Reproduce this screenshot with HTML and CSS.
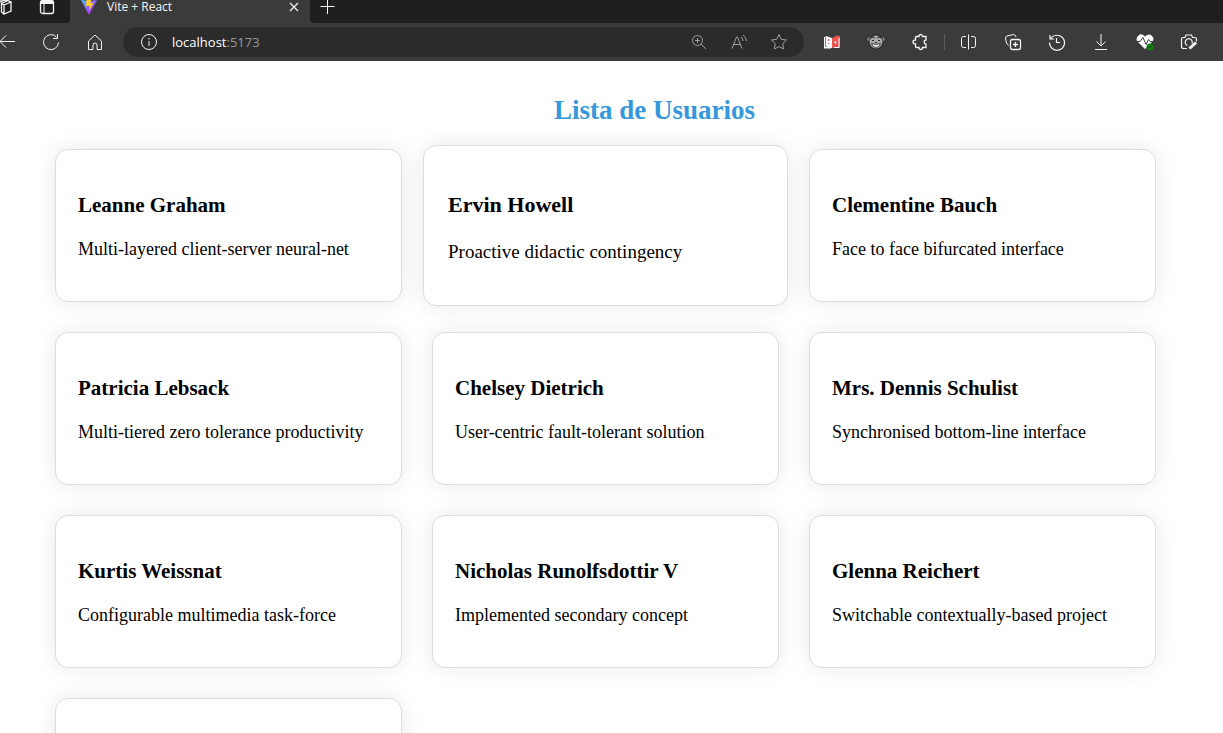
FILE: index.html
```html
<!DOCTYPE html>
<html lang="es">
<head>
<meta charset="utf-8">
<title>Vite + React</title>
<link rel="stylesheet" href="styles.css">
</head>
<body>
<header class="browser">
  <div class="tabstrip">
    <div class="strip-tools">
      <button class="strip-btn" aria-label="Workspaces"><svg class="icon" viewBox="0 0 18 18"><path stroke-width="1.300" d="M8 7l7-3v9l-7 3zM8 7L5.500 5.500v8.500L8 16M5.500 5.500l6.500-3 3 1.500M3 13V4.500L9 2l2 .5M.5 12V4L6 1.500l2 .5"/></svg></button>
      <button class="strip-btn" aria-label="Tab actions"><svg class="icon" viewBox="0 0 18 18"><rect x="2.500" y="2.500" width="13" height="13" rx="2" stroke-width="1.300"/><path d="M3 4.500h12" stroke-width="3"/><path d="M6 5v10"/></svg></button>
    </div>
    <div class="tab">
      <svg class="favicon" viewBox="0 0 18 18"><defs><linearGradient id="v" x1="0" y1="0" x2="1" y2="1"><stop offset="0" stop-color="#41c9ff"/><stop offset=".6" stop-color="#a24bff"/><stop offset="1" stop-color="#bd34fe"/></linearGradient></defs><path fill="url(#v)" d="M1 2l8 1 8-1-8 15z"/><path fill="#ffc928" d="M6.500 1l5-1-1 5h3L9 13l.5-5H6z"/></svg>
      <span class="tab-title">Vite + React</span>
      <button class="close" aria-label="Close tab"><svg class="icon" viewBox="0 0 18 18"><path stroke-width="1.200" d="M5 5l8 8M13 5l-8 8"/></svg></button>
    </div>
    <button class="new-tab" aria-label="New tab"><svg class="icon" viewBox="0 0 18 18"><path d="M9.500 2v14M2.500 8.500h14"/></svg></button>
  </div>
  <div class="toolbar">
    <nav class="nav">
      <button class="tool" aria-label="Back"><svg class="icon" viewBox="0 0 18 18"><path d="M17 8.500H2M8 2.500l-6 6 6 6"/></svg></button>
      <button class="tool" aria-label="Reload"><svg class="icon" viewBox="0 0 18 18"><path d="M16.500 9.500A7.500 7.500 0 1 1 14.500 4M15.500 1v4.500H11"/></svg></button>
      <button class="tool" aria-label="Home"><svg class="icon" viewBox="0 0 18 18"><path d="M2.500 8L9 2l6.500 6v8.500H11V12q0-2-2-2t-2 2v4.500H2.500z"/></svg></button>
    </nav>
    <div class="address">
      <button class="info" aria-label="Site information"><svg class="icon" viewBox="0 0 18 18"><circle cx="9" cy="9" r="7.500"/><path d="M9 8v5M9 5v1.500"/></svg></button>
      <a class="url" href="#">localhost<span class="port">:5173</span></a>
      <button class="page-tool" aria-label="Zoom"><svg class="icon" viewBox="0 0 18 18"><circle cx="7.500" cy="7.500" r="5"/><path d="M11 11l5 5M5 7.500h5M7.500 5v5"/></svg></button>
      <button class="page-tool" aria-label="Read aloud"><svg class="icon" viewBox="0 0 18 18"><path d="M2 15.500L6.500 4h1L12 15.500M3.500 11.500h7M11 4q2 1.500 2 4M13 2q3 2 3.500 6"/></svg></button>
      <button class="page-tool" aria-label="Favorite"><svg class="icon" viewBox="0 0 18 18"><path d="M9 1.500l2.300 4.800 5.200.7-3.800 3.700.9 5.300L9 13.500 4.400 16l.9-5.300L1.500 7l5.200-.7z"/></svg></button>
    </div>
    <div class="tools">
      <button class="tool" aria-label="Dictionary"><svg class="icon plain" viewBox="0 0 18 18"><path fill="#fff" d="M1 4h2v10h5v1.500H1z"/><path fill="#ef5350" d="M2 3h1v11h6l6-.5V3h2v12H2z"/><path fill="#fff" d="M3 3l6 2v10l-6-1.500z"/><path fill="#ef5350" d="M9 5l6-3v11.500L9 15z"/><path fill="none" stroke="#fff" d="M1.500 4v10.500H8M16 5v9.500h-5M11 9q2-1 2 0t-1 2"/><path stroke="#ef5350" d="M5.500 6v2M5.500 10v1"/></svg></button>
      <button class="tool" aria-label="Monkey extension"><svg class="icon plain" viewBox="0 0 18 18"><circle cx="2.500" cy="6.500" r="2" fill="#999"/><circle cx="15.500" cy="6.500" r="2" fill="#999"/><circle cx="9" cy="9" r="7.500" fill="#262626"/><circle cx="9" cy="9" r="6.500" fill="#aaa"/><path fill="none" stroke="#262626" d="M4 5q3-2 4 0M10 5q2-2 4 0M5 7.500h2M11 7.500h2M8 9.500h2"/><path fill="#eee" stroke="#262626" stroke-width=".8" d="M4.500 10.500q4.500 2 9 0-1 4-4.500 4t-4.500-4z"/></svg></button>
      <button class="tool" aria-label="Extensions"><svg class="icon" viewBox="0 0 18 18"><path stroke-width="1.300" d="M5.500 3.500H8q0-2 1.700-2t1.800 2H15V7q-2 .3-2 2t2 2v3.500h-3.500q0 2-1.800 2T8 14.500H5.500q-1 0-1-1V11q-2.500 0-2.500-2t2.500-2V4.500q0-1 1-1z"/></svg></button>
      <span class="divider"></span>
      <button class="tool" aria-label="Split screen"><svg class="icon" viewBox="0 0 18 18"><path d="M6 3.500H3.500q-2 0-2 2v7q0 2 2 2H6M11 3.500h2.500q2 0 2 2v7q0 2-2 2H11M8.500 1.500v15"/></svg></button>
      <button class="tool" aria-label="Collections"><svg class="icon" viewBox="0 0 18 18"><rect x="6.500" y="6.500" width="10" height="10" rx="2" stroke-width="1.300"/><path d="M11.500 9v5M9 11.500h5" stroke-width="1.300"/><path d="M4.500 12.500L2.500 10l-1-5q0-1.500 1.500-2l6.500-1.500q1.500 0 2 1.500l.5 1"/></svg></button>
      <button class="tool" aria-label="History"><svg class="icon" viewBox="0 0 18 18"><path stroke-width="1.200" d="M2 2v4h4M2.500 6A7.500 7.500 0 1 1 1.500 9.500M8.500 5v4.500h3.500"/></svg></button>
      <button class="tool" aria-label="Downloads"><svg class="icon" viewBox="0 0 18 18"><path d="M9 1v12M4.500 8.500L9 13l4.500-4.500M3 16.500h12"/></svg></button>
      <button class="tool" aria-label="Browser essentials"><svg class="icon plain" viewBox="0 0 18 18"><path fill="#fff" d="M9 3.500Q5-.5 2 3t0 6l7 7 7-7q3-3 0-6T9 3.500z"/><path fill="none" stroke="#3b3b3b" d="M1 8.500h3l3-4 3 7 2.500-5 1.500 2h3"/><circle cx="14" cy="14" r="3.500" fill="#107c10"/><path fill="none" stroke="#064706" d="M12.500 14l1 1 2-2"/></svg></button>
      <button class="tool" aria-label="Screenshot"><svg class="icon" viewBox="0 0 18 18"><path stroke-width="1.200" d="M7 15.500H3.500q-2 0-2-2v-7q0-2 2-2H5l1-2.500h5.500l1 2.500h2q2 0 2 2v2M7.500 12.500a3.500 3.500 0 1 1 4.500-2"/><path stroke-width="3" d="M9.500 15.500L16 9.500"/></svg></button>
    </div>
  </div>
</header>
<main class="page">
  <h1 class="title">Lista de Usuarios</h1>
  <div class="cards">
    <article class="card"><h2 class="name">Leanne Graham</h2><p class="phrase">Multi-layered client-server neural-net</p></article>
    <article class="card active"><h2 class="name">Ervin Howell</h2><p class="phrase">Proactive didactic contingency</p></article>
    <article class="card"><h2 class="name">Clementine Bauch</h2><p class="phrase">Face to face bifurcated interface</p></article>
    <article class="card"><h2 class="name">Patricia Lebsack</h2><p class="phrase">Multi-tiered zero tolerance productivity</p></article>
    <article class="card"><h2 class="name">Chelsey Dietrich</h2><p class="phrase">User-centric fault-tolerant solution</p></article>
    <article class="card"><h2 class="name">Mrs. Dennis Schulist</h2><p class="phrase">Synchronised bottom-line interface</p></article>
    <article class="card"><h2 class="name">Kurtis Weissnat</h2><p class="phrase">Configurable multimedia task-force</p></article>
    <article class="card"><h2 class="name">Nicholas Runolfsdottir V</h2><p class="phrase">Implemented secondary concept</p></article>
    <article class="card"><h2 class="name">Glenna Reichert</h2><p class="phrase">Switchable contextually-based project</p></article>
    <article class="card partial"></article>
  </div>
</main>
</body>
</html>
```
FILE: styles.css
```css
* { box-sizing: border-box; }
html, body { height: 100%; }
body {
  margin: 0;
  display: flex;
  flex-direction: column;
  overflow: hidden;
  background: #fff;
  color: #000;
  font-family: "Liberation Serif", "Times New Roman", serif;
}
button {
  display: flex;
  align-items: center;
  justify-content: center;
  padding: 0;
  border: 0;
  background: none;
  color: inherit;
}
.icon {
  width: 18px;
  height: 18px;
  flex: none;
  fill: none;
  stroke: currentColor;
  stroke-width: 1;
}
.plain { stroke: none; }
.browser {
  flex: none;
  background: #3b3b3b;
  color: #f5f5f5;
  font-family: "Open Sans", "Noto Sans", sans-serif;
}
.tabstrip {
  display: flex;
  height: 23px;
  background: #3b3b3b;
  overflow: hidden;
}
.strip-tools {
  display: flex;
  width: 70px;
  padding-bottom: 10px;
  background: #1f1f1f;
  border-bottom-right-radius: 4px;
}
.strip-btn { width: 44px; }
.strip-btn:first-child { width: 41px; margin-left: -16px; }
.tab {
  display: flex;
  align-items: center;
  width: 240px;
  padding: 0 7px 9px 10px;
  gap: 9px;
}
.favicon { width: 18px; height: 18px; flex: none; }
.tab-title { flex: 1; font-size: 12px; line-height: 16px; white-space: nowrap; }
.close { flex: none; }
.new-tab {
  flex: 1;
  justify-content: flex-start;
  padding: 0 8px 10px;
  background: #1f1f1f;
  border-bottom-left-radius: 4px;
}
.toolbar { display: flex; align-items: center; height: 38px; padding-right: 12px; }
.nav, .tools { display: flex; align-items: center; flex: none; }
.nav { margin-left: -15px; }
.tool { width: 44px; height: 30px; }
.address {
  display: flex;
  align-items: center;
  flex: 1;
  height: 30px;
  margin: 0 6px;
  padding: 0 5px 0 17px;
  border-radius: 15px;
  background: #2b2b2b;
}
.info { margin-right: 14px; }
.url { flex: 1; color: #fff; font-size: 13px; line-height: 20px; text-decoration: none; }
.port { color: #9a9a9a; }
.page-tool { width: 40px; height: 30px; color: #a0a0a0; }
.divider { width: 1px; height: 16px; margin: 0 2px; background: #5c5c5c; }
.page { flex: 1; min-height: 0; padding: 34px 67px 0 55px; overflow: hidden; }
.title {
  margin: 0 0 24px;
  padding-left: 98px;
  color: #3498db;
  font-size: 27px;
  line-height: 30px;
  text-align: center;
}
.cards { display: grid; grid-template-columns: repeat(3, 1fr); gap: 30px; }
.card {
  padding: 43px 22px 41px;
  border: 1px solid #ddd;
  border-radius: 13px;
  background: #fff;
  box-shadow: 0 0 22px rgba(0, 0, 0, 0.09);
}
.name { margin: 0 0 21px; font-size: 21px; line-height: 24px; }
.phrase { margin: 0; font-size: 18px; line-height: 22px; }
.active { margin: -4px -9px; padding: 47px 24px 41px; }
.active .name { margin-bottom: 23px; font-size: 22px; }
.active .phrase { font-size: 19px; line-height: 24px; }
.partial { min-height: 153px; }
```
